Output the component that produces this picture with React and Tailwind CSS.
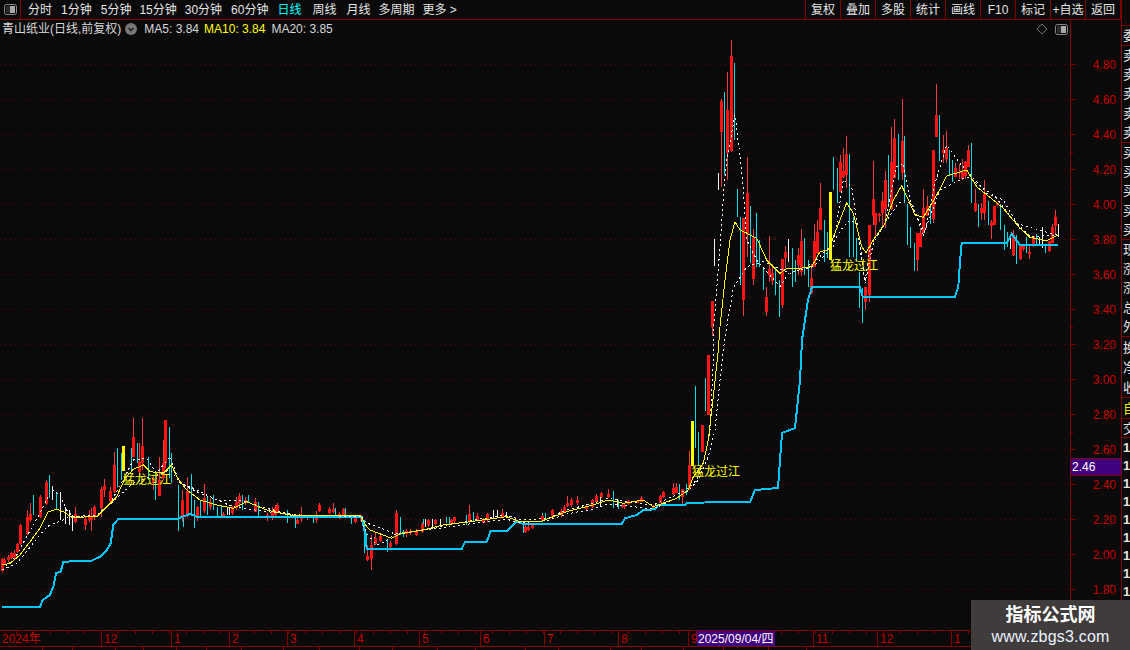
import React from "react";

// zoomed-crop coordinates -> page pixels
const toPage = (ox, oy, rows) =>
  rows.map(([x, ...ys]) => [ox + x / 3, ...ys.map((y) => oy + y / 3)]);

// [x, wickTop, wickBottom, bodyTop, bodyBottom]
const redCandles = [
  ...toPage(0, 400, [
    [6,475,515,478,512],[13,475,495,480,492],[24,465,485,470,480],[33,455,478,460,475],[42,450,478,458,472],[51,430,460,433,455],
    [60,372,436,375,432],[80,330,405,350,402],[90,310,365,342,360],[120,285,355,292,350],[138,240,315,245,312],
    [226,322,368,342,365],[255,350,390,358,375],[268,330,365,350,360],[274,325,392,350,360],[283,316,360,320,352],[304,260,352,268,325],
    [313,238,290,258,270],[331,262,310,274,302],[343,155,280,195,276],[400,55,172,112,172],[418,130,225,185,215],[427,55,210,138,190],
    [458,225,270,235,250],[478,170,288,240,287],[488,120,240,190,235],[496,60,205,60,190],[545,270,365,300,355],[562,232,350,272,342],
    [592,318,362,322,350],[613,252,340,295,332],[631,295,330,305,322],[670,335,355,342,350],[697,318,345,320,340],[708,290,330,305,325],
    [718,280,320,288,310],[736,290,315,300,310],[765,295,335,305,335],[800,338,362,345,350],[815,320,360,335,348],[825,315,355,325,345],
    [832,310,340,316,338],[892,345,372,360,372],[902,322,365,350,358],[920,345,360,348,355],[948,332,368,345,360],[958,310,336,316,332],
    [988,322,342,328,340],[998,308,340,328,336],[1016,335,358,342,355],[1028,325,350,328,345],[1065,345,368,355,365],[1082,345,365,350,362],
  ]),
  ...toPage(360, 470, [
    [22,225,272,258,270],[34,195,300,225,268],[44,185,225,205,222],[60,195,215,198,212],[90,212,235,220,232],[108,120,225,130,222],
    [139,178,200,182,192],[150,178,195,182,190],[168,178,198,182,196],[186,155,190,162,185],[205,148,170,150,165],[225,148,165,150,162],
    [272,148,165,150,162],[283,140,158,142,152],[328,105,160,132,155],[352,130,152,138,150],[370,145,160,150,158],[380,130,155,132,150],
    [427,118,145,130,140],[465,140,158,148,155],[495,165,188,172,185],[505,165,182,170,180],[515,158,178,162,175],[545,135,150,138,150],
    [575,118,140,120,138],[602,118,140,122,135],[611,105,130,110,125],[622,78,110,98,108],[632,85,110,90,105],[650,78,105,90,100],
    [679,105,120,108,118],[697,88,115,90,112],[709,72,100,78,95],[722,65,85,68,82],[743,58,85,72,80],[785,100,115,105,112],[793,100,118,105,112],
    [805,90,105,92,102],[832,90,100,92,98],[844,78,95,85,95],[880,105,115,108,115],[900,75,100,78,98],[910,62,85,65,82],[940,40,75,55,72],[948,38,65,52,68],
  ]),
  ...toPage(680, 330, [
    [7,478,528,478,500],[28,362,480,405,478],[67,285,365,285,365],[85,75,255,75,255],
  ]),
  ...toPage(680, 40, [
    [95,782,888,784,862],[124,178,440,184,275],[142,95,420,210,338],[154,0,335,48,332],[190,535,828,535,780],[202,352,650,458,584],[220,568,735,595,716],
    [259,742,828,772,816],[268,588,725,688,706],[277,672,735,700,724],[307,658,803,658,795],[316,618,690,636,654],[355,625,705,645,675],[364,568,708,604,696],
    [394,672,762,714,758],[403,552,682,604,680],[412,540,642,576,640],[421,428,570,504,570],[481,345,455,366,455],[490,324,415,394,412],[499,288,445,342,405],
  ]),
  ...toPage(860, 80, [
    [16,620,690,622,665],[28,435,665,435,645],[38,243,435,358,408],[46,398,475,400,435],[56,400,425,402,408],[67,335,445,362,398],[76,272,445,300,388],
    [94,140,390,245,388],[103,118,295,175,295],[125,58,300,182,278],[172,460,572,460,540],[181,445,500,460,500],[190,328,460,384,460],[202,348,408,378,408],
    [220,210,430,210,416],[229,12,170,105,170],[250,165,250,210,220],[259,152,250,205,238],[286,248,292,265,290],[298,252,298,275,280],[306,238,300,275,298],
    [316,242,298,245,288],[325,195,262,210,262],[346,328,395,370,393],[364,370,420,384,400],[373,300,420,342,400],[394,420,476,426,438],[403,378,436,378,436],
    [412,368,378,370,376],[460,450,528,465,526],[481,495,540,496,538],[490,495,512,498,508],[508,495,538,516,522],[520,468,502,468,498],[568,482,515,484,514],
    [577,432,490,442,488],[586,390,465,410,438],
  ]),
];

// [x, top, bottom]
const cyanBars = [
  ...toPage(0, 400, [
    [100,285,345],[147,225,295],[168,275,330],[352,145,262],[363,160,240],[392,145,215],[411,130,190],[445,170,240],[466,215,300],[506,80,235],[514,160,250],
    [535,255,392],[550,300,380],[574,222,345],[582,300,385],[600,300,355],[622,290,345],[640,285,330],[650,320,350],[662,315,350],[725,285,330],[745,285,310],
    [773,305,350],[860,330,370],[884,345,385],[940,345,370],[1006,325,355],[1035,325,350],[1054,345,372],[1092,360,460],[1097,400,445],
  ]),
  ...toPage(360, 470, [
    [42,200,225],[82,210,245],[120,140,195],[128,180,200],[190,148,170],[257,140,160],[268,140,165],[318,135,165],[340,125,155],[488,155,190],[545,130,155],[555,130,150],
    [758,62,115],[775,90,118],[958,42,90],
  ]),
  ...toPage(680, 330, [[18,462,495],[46,168,355],[55,305,405],[76,145,243]]),
  ...toPage(680, 40, [
    [133,156,405],[163,70,300],[172,447,530],[181,532,735],[211,498,670],[229,520,680],[238,600,680],[250,682,750],[286,682,765],[298,720,832],[337,625,740],
    [346,660,725],[373,595,705],[385,660,740],[433,540,665],[442,575,655],[460,350,450],[472,385,490],[508,342,650],[520,530,650],[529,595,660],[538,695,805],
  ]),
  ...toPage(860, 80, [
    [7,625,728],[85,225,380],[115,162,300],[133,168,370],[142,372,495],[151,440,505],[163,490,572],[211,372,432],[238,105,243],[268,210,285],[277,240,305],
    [334,190,370],[355,372,440],[385,362,435],[421,372,450],[433,435,510],[442,455,500],[469,465,552],[499,472,520],[529,462,495],[556,495,518],
  ]),
];

const whiteBars = [
  ...toPage(0, 400, [[157,258,300],[180,275,360],[196,320,372],[207,330,375],[217,345,392],[680,320,345],[687,320,345]]),
  ...toPage(360, 470, [[195,148,170],[217,148,170],[240,148,170],[400,120,145],[410,120,140],[438,125,145],[720,70,112],[745,58,85],[770,90,110]]),
  ...toPage(680, 40, [[115,400,450],[103,598,678],[325,598,665]]),
  ...toPage(860, 80, [[451,465,508],[547,440,505],[538,470,495],[595,432,470]]),
];

const yellowBars = [
  [123, 446, 471],
  [692, 421, 466],
  [830, 192, 260],
];

const stopLine = [
  ...toPage(0, 400, [
    [5,620],[120,620],[128,600],[150,585],[160,560],[168,520],[182,515],[190,485],[275,482],[300,470],[320,450],[332,430],[340,375],[355,357],[530,357],[570,342],
    [590,350],[1085,350],[1095,400],[1100,447],
  ]),
  ...toPage(360, 470, [
    [305,237],[315,215],[380,215],[392,183],[440,183],[470,155],[490,162],[785,162],[795,145],[830,135],[850,120],[885,118],[895,105],[975,105],[980,98],
  ]),
  [750,502],[755,490],[778,488],[782,433],[795,428],[800,380],[802,340],[808,300],[812,287],[860,287],
  ...toPage(860, 80, [[8,650],[285,650],[295,620],[300,545],[305,490],[440,488],[455,462],[480,495],[595,495]]),
];

const ma10 = [
  ...toPage(0, 400, [
    [6,495],[30,490],[60,465],[90,425],[120,385],[145,335],[170,328],[190,335],[215,352],[290,350],[320,320],[350,290],[375,235],[400,208],[430,195],[450,215],[490,220],
    [515,195],[530,230],[560,270],[600,300],[650,315],[700,325],[740,305],[800,330],[870,345],[950,345],[1080,345],[1100,380],
  ]),
  ...toPage(360, 470, [
    [30,180],[95,205],[125,190],[190,180],[250,165],[330,155],[440,140],[480,155],[540,155],[620,125],[700,105],[745,90],[790,100],[850,90],[880,110],[950,85],[985,60],[1000,20],
  ]),
  ...toPage(680, 330, [[70,400],[85,330],[100,200],[115,60]]),
  ...toPage(680, 40, [
    [120,860],[135,720],[150,600],[165,545],[180,570],[230,595],[260,660],[300,700],[320,685],[360,685],[395,680],[420,635],[445,630],[480,540],[500,488],[520,520],[545,620],
  ]),
  ...toPage(860, 80, [
    [18,518],[40,480],[75,430],[100,360],[125,317],[150,370],[165,405],[190,412],[225,355],[260,288],[320,270],[350,320],[400,360],[430,385],[480,445],[510,472],[560,482],[595,465],
  ]),
];

const ma5 = [
  ...toPage(0, 400, [
    [6,510],[50,465],[80,410],[120,340],[155,270],[180,285],[200,330],[220,350],[290,345],[330,310],[370,240],[400,180],[440,175],[470,220],[510,170],[540,250],[580,265],
    [650,300],[720,300],[800,325],[880,345],[950,345],[1080,345],[1100,370],
  ]),
  ...toPage(360, 470, [
    [40,165],[100,190],[120,190],[200,178],[260,165],[340,150],[440,135],[480,150],[560,145],[620,120],[700,100],[745,85],[800,95],[880,105],[960,70],[985,55],
  ]),
  ...toPage(680, 330, [[50,450],[75,385],[90,300],[100,100]]),
  ...toPage(680, 40, [
    [100,880],[120,620],[130,470],[140,360],[165,225],[180,350],[190,450],[200,600],[230,660],[300,740],[325,700],[400,680],[460,620],[490,420],[515,440],[530,540],
  ]),
  ...toPage(860, 80, [
    [15,605],[30,500],[75,430],[110,260],[130,250],[150,360],[170,410],[195,460],[225,310],[260,195],[300,250],[345,300],[380,340],[430,360],[470,430],[520,445],[590,465],
  ]),
];

const ma20 = [
  ...toPage(0, 400, [
    [6,510],[50,490],[100,430],[140,380],[190,360],[210,350],[290,350],[360,285],[400,250],[450,230],[510,210],[540,250],[600,280],[700,320],[800,335],[900,345],[1080,350],[1100,400],[1130,435],
  ]),
  ...toPage(360, 470, [
    [75,215],[100,195],[190,180],[260,172],[340,160],[440,148],[480,158],[560,152],[620,132],[700,117],[745,102],[800,108],[880,117],[960,78],[985,62],
  ]),
  ...toPage(680, 330, [[55,450],[85,380],[105,300],[120,150]]),
  ...toPage(680, 40, [
    [135,890],[160,745],[200,680],[250,665],[330,700],[400,670],[450,620],[490,560],[510,540],[530,550],
  ]),
  ...toPage(860, 80, [
    [15,610],[40,490],[75,430],[115,370],[135,360],[160,380],[190,465],[240,330],[270,315],[320,290],[350,310],[400,345],[430,380],[460,420],[510,470],[590,465],
  ]),
];

const prices = ["4.80","4.60","4.40","4.20","4.00","3.80","3.60","3.40","3.20","3.00","2.80","2.60","2.40","2.20","2.00","1.80"];

const periods = [
  { label: "分时", cls: "ml-[7px]" },
  { label: "1分钟", cls: "ml-[9px]" },
  { label: "5分钟", cls: "ml-[9px]" },
  { label: "15分钟", cls: "ml-[8px]" },
  { label: "30分钟", cls: "ml-[8px]" },
  { label: "60分钟", cls: "ml-[9px]" },
  { label: "日线", cls: "ml-[9px] text-[#00ffff]" },
  { label: "周线", cls: "ml-[11px]" },
  { label: "月线", cls: "ml-[10px]" },
  { label: "多周期", cls: "ml-[8px]" },
  { label: "更多 >", cls: "ml-[8px]" },
];

const tools = ["复权", "叠加", "多股", "统计", "画线", "F10", "标记", "+自选", "返回"];

const months = [
  { label: "2024年", cls: "w-[101px]" },
  { label: "12", cls: "w-[70px]" },
  { label: "1", cls: "w-[58px]" },
  { label: "2", cls: "w-[58px]" },
  { label: "3", cls: "w-[67px]" },
  { label: "4", cls: "w-[65px]" },
  { label: "5", cls: "w-[61px]" },
  { label: "6", cls: "w-[64px]" },
  { label: "7", cls: "w-[74px]" },
  { label: "8", cls: "w-[70px]" },
  { label: "9", cls: "w-[125px]" },
  { label: "11", cls: "w-[64px]" },
  { label: "12", cls: "w-[74px]" },
  { label: "1", cls: "flex-1" },
];

const footerCells = ["w-[43px]","w-[30px]","w-[43px]","w-[28px]","w-[33px]","w-[30px]","w-[35px]","w-[42px]","w-[36px]","w-[40px]","w-[33px]","w-[45px]","w-[38px]","w-[50px]","w-[33px]","w-[52px]","w-[31px]","w-[42px]","w-[40px]","w-[45px]","w-[38px]"];

const sideGroups = [
  { cls: "h-[20px] border-b border-[#800000]", rows: ["委"] },
  { cls: "h-[97px] border-b border-[#800000]", rows: ["卖", "卖", "卖", "卖", "卖"] },
  { cls: "h-[97px] border-b border-[#800000]", rows: ["买", "买", "买", "买", "买"] },
  { cls: "h-[97px] border-b border-[#800000]", rows: ["现", "涨", "涨", "总", "外"] },
  { cls: "h-[61px] border-b border-[#800000]", rows: ["换", "净", "收"] },
  { cls: "h-[21px] border-b border-[#800000] text-[#e8e800]", rows: ["自"] },
  { cls: "h-[19px] border-b border-[#800000]", rows: ["交"] },
];

const toPoints = (pts) => pts.map(([x, y]) => `${x.toFixed(1)},${y.toFixed(1)}`).join(" ");

const PanelIcon = ({ className }) => (
  <svg viewBox="0 0 13 11" className={className}>
    <rect x="0.5" y="0.5" width="12" height="10" rx="2" fill="none" stroke="#8a8a8a" />
    <rect x="6" y="2" width="5" height="7" fill="#a8a8a8" />
    <rect x="2" y="2" width="4" height="7" fill="#2c2c2c" />
  </svg>
);

const Chart = () => (
  <svg viewBox="0 40 1070 590" className="block w-[1070px] h-[590px] shrink-0" shapeRendering="crispEdges">
    {prices.map((p, i) => (
      <line key={p} x1="0" x2="1067" y1={64.5 + i * 35} y2={64.5 + i * 35} stroke="#6a0000" strokeDasharray="1 4" />
    ))}
    {whiteBars.map(([x, top, bottom], i) => (
      <rect key={i} x={Math.round(x)} y={top} width="1" height={bottom - top} fill="#f0f0f0" />
    ))}
    {cyanBars.map(([x, top, bottom], i) => (
      <rect key={i} x={Math.round(x)} y={top} width="1" height={bottom - top} fill="#00e0e8" />
    ))}
    {redCandles.map(([x, wt, wb, bt, bb], i) => (
      <g key={i}>
        <rect x={Math.round(x)} y={wt} width="1" height={wb - wt} fill="#f03c3c" />
        <rect x={Math.round(x) - 1} y={bt} width="3" height={Math.max(bb - bt, 1)} fill="#ff1414" />
      </g>
    ))}
    {yellowBars.map(([x, top, bottom]) => (
      <rect key={x} x={x - 1} y={top} width="3" height={bottom - top} fill="#ffff00" />
    ))}
    <polyline points={toPoints(stopLine)} fill="none" stroke="#00c8ff" strokeWidth="2" />
    <polyline points={toPoints(ma5)} fill="none" stroke="#f4f4f4" strokeDasharray="2 3" />
    <polyline points={toPoints(ma20)} fill="none" stroke="#f4f4f4" strokeDasharray="2 3" />
    <polyline points={toPoints(ma10)} fill="none" stroke="#ffff00" />
    <g fill="#ffff00" fontSize="12" shapeRendering="auto">
      <text x="123" y="484">猛龙过江</text>
      <text x="692" y="476">猛龙过江</text>
      <text x="830" y="270">猛龙过江</text>
    </g>
  </svg>
);

export default function App() {
  return (
    <div className="relative w-[1130px] h-[650px] overflow-hidden bg-[#0a0a0a] text-[12px] leading-none text-[#e6e6e6] font-['Liberation_Sans','Noto_Sans_CJK_SC',sans-serif]">
      <div className="flex h-full">
        <div className="flex flex-col w-[1121px] border-r border-[#800000] box-content">
          {/* toolbar */}
          <div className="flex items-center h-[20px] border-b border-[#800000] shrink-0">
            <div className="flex items-center justify-center w-[21px] h-full border-r border-[#800000]">
              <PanelIcon className="w-[13px] h-[11px]" />
            </div>
            {periods.map((p) => (
              <span key={p.label} className={`whitespace-nowrap ${p.cls}`}>{p.label}</span>
            ))}
            <div className="flex ml-auto h-full">
              {tools.map((t) => (
                <div key={t} className="flex items-center justify-center w-[35px] border-l border-[#800000] whitespace-nowrap">{t}</div>
              ))}
              <div className="w-px border-l border-[#800000]" />
            </div>
          </div>

          <div className="flex h-[610px] shrink-0">
            {/* chart column */}
            <div className="flex flex-col w-[1070px]">
              <div className="flex items-center h-[20px] shrink-0 pb-[2px] pl-[2px] text-[#d8d8d8]">
                <span>青山纸业(日线,前复权)</span>
                <svg viewBox="0 0 12 12" className="w-[12px] h-[12px] ml-[4px]">
                  <circle cx="6" cy="6" r="6" fill="#767676" />
                  <path d="M3.5 5 L6 7.5 L8.5 5" fill="none" stroke="#1a1a1a" strokeWidth="1.4" />
                </svg>
                <span className="ml-[7px]">MA5: 3.84</span>
                <span className="ml-[5px] text-[#ffff00]">MA10: 3.84</span>
                <span className="ml-[6px]">MA20: 3.85</span>
                <svg viewBox="0 0 12 12" className="w-[12px] h-[12px] ml-auto">
                  <path d="M6 1 L11 6 L6 11 L1 6 Z" fill="none" stroke="#6e6e6e" />
                </svg>
                <PanelIcon className="w-[13px] h-[11px] ml-[7px] mr-[2px]" />
              </div>
              <Chart />
            </div>

            {/* price axis */}
            <div className="relative flex w-[50px] box-content border-l border-[#800000] h-[610px]">
              <svg viewBox="0 20 6 610" className="block w-[6px] h-[610px] shrink-0" shapeRendering="crispEdges">
                {prices.map((p, i) => (
                  <g key={p} stroke="#800000">
                    <line x1="0" x2="5" y1={64.5 + i * 35} y2={64.5 + i * 35} />
                    <line x1="0" x2="2" y1={82 + i * 35} y2={82 + i * 35} />
                  </g>
                ))}
              </svg>
              <div className="flex flex-col flex-1 pt-[27px] pr-[5px] text-[#c80000]">
                {prices.map((p) => (
                  <div key={p} className="flex items-center justify-end h-[35px] shrink-0">{p}</div>
                ))}
              </div>
              <div className="absolute left-0 right-0 top-[438px] flex items-center h-[16px] box-content pl-[1px] border-y border-[#800000] bg-[#400080] text-white">2.46</div>
            </div>
          </div>

          {/* date axis */}
          <div className="relative flex h-[17px] shrink-0 border-y border-[#800000] text-[#c80000]">
            {months.map((m, i) => (
              <div key={i} className={`flex items-center pl-[2px] border-l border-[#800000] first:border-l-0 ${m.cls}`}>{m.label}</div>
            ))}
            <svg viewBox="0 0 1121 3" className="absolute left-0 top-0 w-[1121px] h-[3px]" shapeRendering="crispEdges">
              {Array.from({ length: 64 }, (_, i) => (
                <line key={i} x1={16 + i * 17} x2={16 + i * 17} y1="0" y2="3" stroke="#800000" />
              ))}
            </svg>
            <div className="absolute left-[697px] top-0 flex items-center w-[78px] h-full pl-[1px] bg-[#400080] text-white">2025/09/04/四</div>
          </div>

          {/* cut-off row under the date axis */}
          <div className="flex flex-1 overflow-hidden">
            {footerCells.map((cls, i) => (
              <div key={i} className={`h-full border-r border-[#800000] ${cls}`} />
            ))}
          </div>
        </div>

        {/* right quote panel, cut off by the window */}
        <div className="flex-1 min-w-0 overflow-hidden text-[13px] whitespace-nowrap">
          <div className="h-[25px] border-b border-[#800000] box-content" />
          {sideGroups.map((g, i) => (
            <div key={i} className={`flex flex-col justify-around overflow-hidden ${g.cls}`}>
              {g.rows.map((r, j) => (
                <div key={j} className="pl-[1px]">{r}</div>
              ))}
            </div>
          ))}
          {Array.from({ length: 10 }, (_, i) => (
            <div key={i} className="flex items-center h-[18px] pl-[1px] font-bold">1</div>
          ))}
        </div>
      </div>

      {/* watermark */}
      <div className="absolute right-0 bottom-0 flex flex-col items-center justify-center w-[159px] h-[50px] gap-[5px] bg-[#413c3c]">
        <span className="text-[18px] font-bold text-white">指标公式网</span>
        <span className="text-[16px] tracking-[0.2px] text-[#eaf2ff]">www.zbgs3.com</span>
      </div>
    </div>
  );
}
